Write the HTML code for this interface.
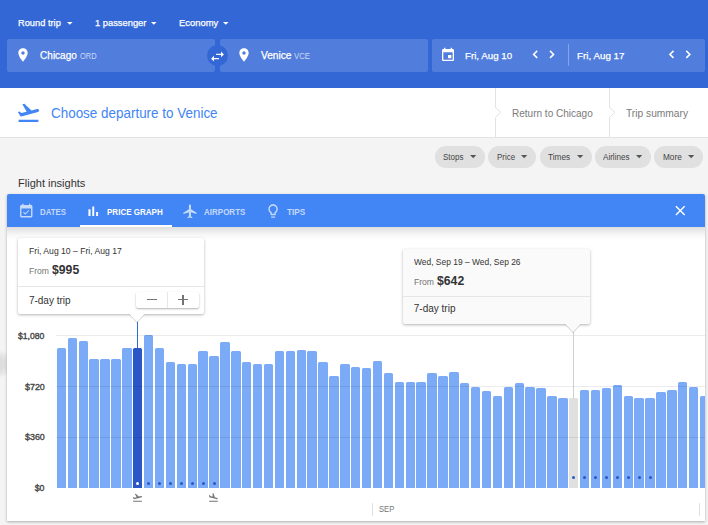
<!DOCTYPE html>
<html><head><meta charset="utf-8"><style>
html,body{margin:0;padding:0}
body{width:708px;height:525px;overflow:hidden;position:relative;background:#f4f4f4;font-family:"Liberation Sans",sans-serif}
.t{position:absolute;white-space:nowrap}
.i{position:absolute;display:block;overflow:visible}
.b{position:absolute}
</style></head><body>
<div class="b" style="left:0;top:0;width:708px;height:88px;background:#3367d6"></div>
<div class="t" style="left:18.20px;top:18.20px;font-size:9.8px;line-height:9.8px;color:#fff;font-weight:normal;transform:scaleX(0.9465);transform-origin:0 0;-webkit-text-stroke:0.25px currentColor;">Round trip</div>
<svg class="i" style="left:66.90px;top:22.10px" width="5.6" height="2.8" viewBox="0 0 5.6 2.8"><path fill="#fff" d="M0 0H5.6L2.8 2.8Z"/></svg>
<div class="t" style="left:94.70px;top:18.20px;font-size:9.8px;line-height:9.8px;color:#fff;font-weight:normal;transform:scaleX(0.9529);transform-origin:0 0;-webkit-text-stroke:0.25px currentColor;">1 passenger</div>
<svg class="i" style="left:151.30px;top:22.10px" width="5.6" height="2.8" viewBox="0 0 5.6 2.8"><path fill="#fff" d="M0 0H5.6L2.8 2.8Z"/></svg>
<div class="t" style="left:179.00px;top:18.20px;font-size:9.8px;line-height:9.8px;color:#fff;font-weight:normal;transform:scaleX(0.9597);transform-origin:0 0;-webkit-text-stroke:0.25px currentColor;">Economy</div>
<svg class="i" style="left:223.40px;top:22.10px" width="5.6" height="2.8" viewBox="0 0 5.6 2.8"><path fill="#fff" d="M0 0H5.6L2.8 2.8Z"/></svg>
<div class="b" style="left:7px;top:39px;width:208px;height:33px;background:rgba(255,255,255,0.15);border-radius:2px"></div>
<div class="b" style="left:220px;top:39px;width:208px;height:33px;background:rgba(255,255,255,0.15);border-radius:2px"></div>
<div class="b" style="left:432px;top:39px;width:273px;height:33px;background:rgba(255,255,255,0.15);border-radius:2px"></div>
<div class="b" style="left:206.6px;top:44.6px;width:21.5px;height:21.5px;background:#3367d6;border-radius:50%"></div>
<svg class="i" style="left:208.80px;top:47.80px;" width="17" height="17" viewBox="0 0 24 24"><path fill="#fff" d="M6.99 11L3 15l3.99 4v-3H14v-2H6.99v-3zM21 9l-3.99-4v3H10v2h7.01v3L21 9z"/></svg>
<svg class="i" style="left:14.90px;top:46.90px;" width="16" height="16" viewBox="0 0 24 24"><path fill="#fff" d="M12 2C8.13 2 5 5.13 5 9c0 5.25 7 13 7 13s7-7.75 7-13c0-3.87-3.13-7-7-7zm0 9.5c-1.38 0-2.5-1.12-2.5-2.5s1.12-2.5 2.5-2.5 2.5 1.12 2.5 2.5-1.12 2.5-2.5 2.5z"/></svg>
<svg class="i" style="left:235.80px;top:46.90px;" width="16" height="16" viewBox="0 0 24 24"><path fill="#fff" d="M12 2C8.13 2 5 5.13 5 9c0 5.25 7 13 7 13s7-7.75 7-13c0-3.87-3.13-7-7-7zm0 9.5c-1.38 0-2.5-1.12-2.5-2.5s1.12-2.5 2.5-2.5 2.5 1.12 2.5 2.5-1.12 2.5-2.5 2.5z"/></svg>
<div class="t" style="left:40.10px;top:50.73px;font-size:10px;line-height:10px;color:#fff;font-weight:normal;-webkit-text-stroke:0.25px currentColor;">Chicago</div>
<div class="t" style="left:79.70px;top:51.92px;font-size:8.6px;line-height:8.6px;color:rgba(255,255,255,0.72);font-weight:normal;transform:scaleX(0.8687);transform-origin:0 0;">ORD</div>
<div class="t" style="left:260.50px;top:50.73px;font-size:10px;line-height:10px;color:#fff;font-weight:normal;transform:scaleX(1.0160);transform-origin:0 0;-webkit-text-stroke:0.25px currentColor;">Venice</div>
<div class="t" style="left:293.80px;top:51.92px;font-size:8.6px;line-height:8.6px;color:rgba(255,255,255,0.72);font-weight:normal;transform:scaleX(0.9106);transform-origin:0 0;">VCE</div>
<svg class="i" style="left:439.80px;top:47.40px;" width="16" height="16" viewBox="0 0 24 24"><path fill="#fff" d="M17 12h-5v5h5v-5zM16 1v2H8V1H6v2H5c-1.11 0-1.99.9-1.99 2L3 19c0 1.1.89 2 2 2h14c1.1 0 2-.9 2-2V5c0-1.1-.9-2-2-2h-1V1h-2zm3 18H5V8h14v11z"/></svg>
<div class="t" style="left:465.30px;top:50.90px;font-size:9.8px;line-height:9.8px;color:#fff;font-weight:normal;transform:scaleX(0.9938);transform-origin:0 0;-webkit-text-stroke:0.25px currentColor;">Fri, Aug 10</div>
<svg class="i" style="left:0;top:0" width="708" height="80"><polyline points="537.2,50.9 533.6,54.4 537.2,57.9" fill="none" stroke="#fff" stroke-width="1.5"/></svg>
<svg class="i" style="left:0;top:0" width="708" height="80"><polyline points="550.0,50.9 553.6,54.4 550.0,57.9" fill="none" stroke="#fff" stroke-width="1.5"/></svg>
<div class="b" style="left:568px;top:44.4px;width:1px;height:21.6px;background:rgba(255,255,255,0.3)"></div>
<div class="t" style="left:577.10px;top:50.90px;font-size:9.8px;line-height:9.8px;color:#fff;font-weight:normal;-webkit-text-stroke:0.25px currentColor;">Fri, Aug 17</div>
<svg class="i" style="left:0;top:0" width="708" height="80"><polyline points="673.5,50.9 669.9,54.4 673.5,57.9" fill="none" stroke="#fff" stroke-width="1.5"/></svg>
<svg class="i" style="left:0;top:0" width="708" height="80"><polyline points="686.3,50.9 689.9,54.4 686.3,57.9" fill="none" stroke="#fff" stroke-width="1.5"/></svg>
<div class="b" style="left:0;top:88px;width:708px;height:49px;background:#fff;border-bottom:1px solid #e3e3e3"></div>
<svg class="i" style="left:16.30px;top:99.90px;" width="25" height="25" viewBox="0 0 24 24"><path fill="#4285f4" d="M2.5 19h19v2h-19zm19.57-9.36c-.21-.8-1.04-1.28-1.84-1.06L14.92 10l-6.9-6.43-1.93.51 4.14 7.17-4.97 1.33-1.97-1.54-1.45.39 1.82 3.16.77 1.33 1.6-.43 5.31-1.42 4.35-1.16 5.31-1.42c.81-.23 1.28-1.05 1.07-1.85z"/></svg>
<div class="t" style="left:51.00px;top:106.35px;font-size:14px;line-height:14px;color:#4285f4;font-weight:normal;transform:scaleX(0.9598);transform-origin:0 0;">Choose departure to Venice</div>
<svg class="i" style="left:494.9px;top:88px" width="8" height="49" viewBox="0 0 8 49"><path d="M0.5 0V19.6L5.9 24.3L0.5 29.4V49" fill="none" stroke="#e3e3e3" stroke-width="1"/></svg>
<svg class="i" style="left:609.0px;top:88px" width="8" height="49" viewBox="0 0 8 49"><path d="M0.5 0V19.6L5.9 24.3L0.5 29.4V49" fill="none" stroke="#e3e3e3" stroke-width="1"/></svg>
<div class="t" style="left:511.75px;top:108.90px;font-size:10.4px;line-height:10.4px;color:#7a7a7a;font-weight:normal;transform:scaleX(0.9639);transform-origin:0 0;">Return to Chicago</div>
<div class="t" style="left:625.90px;top:108.90px;font-size:10.4px;line-height:10.4px;color:#7a7a7a;font-weight:normal;transform:scaleX(0.9831);transform-origin:0 0;">Trip summary</div>
<div class="b" style="left:435.0px;top:146px;width:50.0px;height:21.6px;background:#e0e0e0;border-radius:11px"></div>
<div class="t" style="left:442.80px;top:153.01px;font-size:9.2px;line-height:9.2px;color:#444;font-weight:normal;transform:scaleX(0.8714);transform-origin:0 0;">Stops</div>
<svg class="i" style="left:469.80px;top:155.10px" width="6.3" height="3.15" viewBox="0 0 6.3 3.15"><path fill="#555" d="M0 0H6.3L3.15 3.15Z"/></svg>
<div class="b" style="left:488.4px;top:146px;width:47.5px;height:21.6px;background:#e0e0e0;border-radius:11px"></div>
<div class="t" style="left:496.75px;top:153.01px;font-size:9.2px;line-height:9.2px;color:#444;font-weight:normal;transform:scaleX(0.8613);transform-origin:0 0;">Price</div>
<svg class="i" style="left:520.90px;top:155.10px" width="6.3" height="3.15" viewBox="0 0 6.3 3.15"><path fill="#555" d="M0 0H6.3L3.15 3.15Z"/></svg>
<div class="b" style="left:539.7px;top:146px;width:52.0px;height:21.6px;background:#e0e0e0;border-radius:11px"></div>
<div class="t" style="left:547.75px;top:153.01px;font-size:9.2px;line-height:9.2px;color:#444;font-weight:normal;transform:scaleX(0.9007);transform-origin:0 0;">Times</div>
<svg class="i" style="left:576.60px;top:155.10px" width="6.3" height="3.15" viewBox="0 0 6.3 3.15"><path fill="#555" d="M0 0H6.3L3.15 3.15Z"/></svg>
<div class="b" style="left:595.1px;top:146px;width:55.9px;height:21.6px;background:#e0e0e0;border-radius:11px"></div>
<div class="t" style="left:603.20px;top:153.01px;font-size:9.2px;line-height:9.2px;color:#444;font-weight:normal;transform:scaleX(0.8784);transform-origin:0 0;">Airlines</div>
<svg class="i" style="left:636.20px;top:155.10px" width="6.3" height="3.15" viewBox="0 0 6.3 3.15"><path fill="#555" d="M0 0H6.3L3.15 3.15Z"/></svg>
<div class="b" style="left:654.4px;top:146px;width:48.5px;height:21.6px;background:#e0e0e0;border-radius:11px"></div>
<div class="t" style="left:662.50px;top:153.01px;font-size:9.2px;line-height:9.2px;color:#444;font-weight:normal;transform:scaleX(0.8970);transform-origin:0 0;">More</div>
<svg class="i" style="left:687.60px;top:155.10px" width="6.3" height="3.15" viewBox="0 0 6.3 3.15"><path fill="#555" d="M0 0H6.3L3.15 3.15Z"/></svg>
<div class="t" style="left:18.10px;top:177.69px;font-size:11px;line-height:11px;color:#333;font-weight:normal;">Flight insights</div>
<div class="b" style="left:-16px;top:350px;width:28px;height:28px;border-radius:50%;background:radial-gradient(circle,rgba(0,0,0,0.09) 30%,rgba(0,0,0,0.04) 60%,rgba(0,0,0,0) 71%)"></div>
<div class="b" style="left:7px;top:194px;width:698px;height:327px;background:#fff;box-shadow:0 1px 3px rgba(0,0,0,0.3);border-radius:2px 2px 0 0;overflow:hidden">
<div class="b" style="left:49.75px;top:154.00px;width:9.45px;height:139.80px;background:#7baaf7;border-radius:1.5px 1.5px 0 0"></div>
<div class="b" style="left:60.65px;top:143.50px;width:9.45px;height:150.30px;background:#7baaf7;border-radius:1.5px 1.5px 0 0"></div>
<div class="b" style="left:71.55px;top:147.00px;width:9.45px;height:146.80px;background:#7baaf7;border-radius:1.5px 1.5px 0 0"></div>
<div class="b" style="left:82.45px;top:165.00px;width:9.45px;height:128.80px;background:#7baaf7;border-radius:1.5px 1.5px 0 0"></div>
<div class="b" style="left:93.35px;top:165.00px;width:9.45px;height:128.80px;background:#7baaf7;border-radius:1.5px 1.5px 0 0"></div>
<div class="b" style="left:104.25px;top:165.00px;width:9.45px;height:128.80px;background:#7baaf7;border-radius:1.5px 1.5px 0 0"></div>
<div class="b" style="left:115.15px;top:154.00px;width:9.45px;height:139.80px;background:#7baaf7;border-radius:1.5px 1.5px 0 0"></div>
<div class="b" style="left:126.05px;top:154.00px;width:9.45px;height:139.80px;background:#2a56c6;border-radius:1.5px 1.5px 0 0"></div>
<div class="b" style="left:136.95px;top:140.80px;width:9.45px;height:153.00px;background:#7baaf7;border-radius:1.5px 1.5px 0 0"></div>
<div class="b" style="left:147.85px;top:154.40px;width:9.45px;height:139.40px;background:#7baaf7;border-radius:1.5px 1.5px 0 0"></div>
<div class="b" style="left:158.75px;top:168.00px;width:9.45px;height:125.80px;background:#7baaf7;border-radius:1.5px 1.5px 0 0"></div>
<div class="b" style="left:169.65px;top:169.50px;width:9.45px;height:124.30px;background:#7baaf7;border-radius:1.5px 1.5px 0 0"></div>
<div class="b" style="left:180.55px;top:169.50px;width:9.45px;height:124.30px;background:#7baaf7;border-radius:1.5px 1.5px 0 0"></div>
<div class="b" style="left:191.45px;top:157.00px;width:9.45px;height:136.80px;background:#7baaf7;border-radius:1.5px 1.5px 0 0"></div>
<div class="b" style="left:202.35px;top:162.00px;width:9.45px;height:131.80px;background:#7baaf7;border-radius:1.5px 1.5px 0 0"></div>
<div class="b" style="left:213.25px;top:148.20px;width:9.45px;height:145.60px;background:#7baaf7;border-radius:1.5px 1.5px 0 0"></div>
<div class="b" style="left:224.15px;top:157.00px;width:9.45px;height:136.80px;background:#7baaf7;border-radius:1.5px 1.5px 0 0"></div>
<div class="b" style="left:235.05px;top:168.00px;width:9.45px;height:125.80px;background:#7baaf7;border-radius:1.5px 1.5px 0 0"></div>
<div class="b" style="left:245.95px;top:169.50px;width:9.45px;height:124.30px;background:#7baaf7;border-radius:1.5px 1.5px 0 0"></div>
<div class="b" style="left:256.85px;top:169.50px;width:9.45px;height:124.30px;background:#7baaf7;border-radius:1.5px 1.5px 0 0"></div>
<div class="b" style="left:267.75px;top:157.00px;width:9.45px;height:136.80px;background:#7baaf7;border-radius:1.5px 1.5px 0 0"></div>
<div class="b" style="left:278.65px;top:157.00px;width:9.45px;height:136.80px;background:#7baaf7;border-radius:1.5px 1.5px 0 0"></div>
<div class="b" style="left:289.55px;top:155.80px;width:9.45px;height:138.00px;background:#7baaf7;border-radius:1.5px 1.5px 0 0"></div>
<div class="b" style="left:300.45px;top:157.00px;width:9.45px;height:136.80px;background:#7baaf7;border-radius:1.5px 1.5px 0 0"></div>
<div class="b" style="left:311.35px;top:168.00px;width:9.45px;height:125.80px;background:#7baaf7;border-radius:1.5px 1.5px 0 0"></div>
<div class="b" style="left:322.25px;top:181.60px;width:9.45px;height:112.20px;background:#7baaf7;border-radius:1.5px 1.5px 0 0"></div>
<div class="b" style="left:333.15px;top:169.50px;width:9.45px;height:124.30px;background:#7baaf7;border-radius:1.5px 1.5px 0 0"></div>
<div class="b" style="left:344.05px;top:173.00px;width:9.45px;height:120.80px;background:#7baaf7;border-radius:1.5px 1.5px 0 0"></div>
<div class="b" style="left:354.95px;top:174.20px;width:9.45px;height:119.60px;background:#7baaf7;border-radius:1.5px 1.5px 0 0"></div>
<div class="b" style="left:365.85px;top:166.70px;width:9.45px;height:127.10px;background:#7baaf7;border-radius:1.5px 1.5px 0 0"></div>
<div class="b" style="left:376.75px;top:179.10px;width:9.45px;height:114.70px;background:#7baaf7;border-radius:1.5px 1.5px 0 0"></div>
<div class="b" style="left:387.65px;top:188.20px;width:9.45px;height:105.60px;background:#7baaf7;border-radius:1.5px 1.5px 0 0"></div>
<div class="b" style="left:398.55px;top:188.20px;width:9.45px;height:105.60px;background:#7baaf7;border-radius:1.5px 1.5px 0 0"></div>
<div class="b" style="left:409.45px;top:188.20px;width:9.45px;height:105.60px;background:#7baaf7;border-radius:1.5px 1.5px 0 0"></div>
<div class="b" style="left:420.35px;top:179.10px;width:9.45px;height:114.70px;background:#7baaf7;border-radius:1.5px 1.5px 0 0"></div>
<div class="b" style="left:431.25px;top:182.00px;width:9.45px;height:111.80px;background:#7baaf7;border-radius:1.5px 1.5px 0 0"></div>
<div class="b" style="left:442.15px;top:177.60px;width:9.45px;height:116.20px;background:#7baaf7;border-radius:1.5px 1.5px 0 0"></div>
<div class="b" style="left:453.05px;top:189.20px;width:9.45px;height:104.60px;background:#7baaf7;border-radius:1.5px 1.5px 0 0"></div>
<div class="b" style="left:463.95px;top:192.60px;width:9.45px;height:101.20px;background:#7baaf7;border-radius:1.5px 1.5px 0 0"></div>
<div class="b" style="left:474.85px;top:197.30px;width:9.45px;height:96.50px;background:#7baaf7;border-radius:1.5px 1.5px 0 0"></div>
<div class="b" style="left:485.75px;top:201.50px;width:9.45px;height:92.30px;background:#7baaf7;border-radius:1.5px 1.5px 0 0"></div>
<div class="b" style="left:496.65px;top:192.60px;width:9.45px;height:101.20px;background:#7baaf7;border-radius:1.5px 1.5px 0 0"></div>
<div class="b" style="left:507.55px;top:189.20px;width:9.45px;height:104.60px;background:#7baaf7;border-radius:1.5px 1.5px 0 0"></div>
<div class="b" style="left:518.45px;top:192.60px;width:9.45px;height:101.20px;background:#7baaf7;border-radius:1.5px 1.5px 0 0"></div>
<div class="b" style="left:529.35px;top:194.20px;width:9.45px;height:99.60px;background:#7baaf7;border-radius:1.5px 1.5px 0 0"></div>
<div class="b" style="left:540.25px;top:201.50px;width:9.45px;height:92.30px;background:#7baaf7;border-radius:1.5px 1.5px 0 0"></div>
<div class="b" style="left:551.15px;top:203.80px;width:9.45px;height:90.00px;background:#7baaf7;border-radius:1.5px 1.5px 0 0"></div>
<div class="b" style="left:562.05px;top:203.90px;width:9.45px;height:89.90px;background:#e0e0e0;border-radius:1.5px 1.5px 0 0"></div>
<div class="b" style="left:572.95px;top:195.60px;width:9.45px;height:98.20px;background:#7baaf7;border-radius:1.5px 1.5px 0 0"></div>
<div class="b" style="left:583.85px;top:195.60px;width:9.45px;height:98.20px;background:#7baaf7;border-radius:1.5px 1.5px 0 0"></div>
<div class="b" style="left:594.75px;top:194.10px;width:9.45px;height:99.70px;background:#7baaf7;border-radius:1.5px 1.5px 0 0"></div>
<div class="b" style="left:605.65px;top:191.40px;width:9.45px;height:102.40px;background:#7baaf7;border-radius:1.5px 1.5px 0 0"></div>
<div class="b" style="left:616.55px;top:201.50px;width:9.45px;height:92.30px;background:#7baaf7;border-radius:1.5px 1.5px 0 0"></div>
<div class="b" style="left:627.45px;top:203.70px;width:9.45px;height:90.10px;background:#7baaf7;border-radius:1.5px 1.5px 0 0"></div>
<div class="b" style="left:638.35px;top:203.70px;width:9.45px;height:90.10px;background:#7baaf7;border-radius:1.5px 1.5px 0 0"></div>
<div class="b" style="left:649.25px;top:197.50px;width:9.45px;height:96.30px;background:#7baaf7;border-radius:1.5px 1.5px 0 0"></div>
<div class="b" style="left:660.15px;top:195.50px;width:9.45px;height:98.30px;background:#7baaf7;border-radius:1.5px 1.5px 0 0"></div>
<div class="b" style="left:671.05px;top:188.00px;width:9.45px;height:105.80px;background:#7baaf7;border-radius:1.5px 1.5px 0 0"></div>
<div class="b" style="left:681.95px;top:192.90px;width:9.45px;height:100.90px;background:#7baaf7;border-radius:1.5px 1.5px 0 0"></div>
<div class="b" style="left:692.85px;top:201.70px;width:9.45px;height:92.10px;background:#7baaf7;border-radius:1.5px 1.5px 0 0"></div>
<div class="b" style="left:49px;top:140.90px;width:700px;height:1px;background:rgba(0,0,0,0.08)"></div>
<div class="b" style="left:49px;top:191.90px;width:700px;height:1px;background:rgba(0,0,0,0.08)"></div>
<div class="b" style="left:49px;top:242.70px;width:700px;height:1px;background:rgba(0,0,0,0.08)"></div>
<div class="t" style="left:11.10px;top:137.55px;font-size:8.8px;line-height:8.8px;color:#444;font-weight:normal;transform:scaleX(0.9807);transform-origin:0 0;-webkit-text-stroke:0.35px #444;">$1,080</div>
<div class="t" style="left:17.70px;top:188.55px;font-size:8.8px;line-height:8.8px;color:#444;font-weight:normal;transform:scaleX(1.0112);transform-origin:0 0;-webkit-text-stroke:0.35px #444;">$720</div>
<div class="t" style="left:17.70px;top:239.35px;font-size:8.8px;line-height:8.8px;color:#444;font-weight:normal;transform:scaleX(1.0112);transform-origin:0 0;-webkit-text-stroke:0.35px #444;">$360</div>
<div class="t" style="left:27.70px;top:289.65px;font-size:8.8px;line-height:8.8px;color:#444;font-weight:normal;-webkit-text-stroke:0.35px #444;">$0</div>
<div class="b" style="left:129.20px;top:287.90px;width:3px;height:3px;border-radius:50%;background:#fff"></div>
<div class="b" style="left:140.10px;top:287.90px;width:3px;height:3px;border-radius:50%;background:#2a56c6"></div>
<div class="b" style="left:151.00px;top:287.90px;width:3px;height:3px;border-radius:50%;background:#2a56c6"></div>
<div class="b" style="left:161.90px;top:287.90px;width:3px;height:3px;border-radius:50%;background:#2a56c6"></div>
<div class="b" style="left:172.80px;top:287.90px;width:3px;height:3px;border-radius:50%;background:#2a56c6"></div>
<div class="b" style="left:183.70px;top:287.90px;width:3px;height:3px;border-radius:50%;background:#2a56c6"></div>
<div class="b" style="left:194.60px;top:287.90px;width:3px;height:3px;border-radius:50%;background:#2a56c6"></div>
<div class="b" style="left:205.50px;top:287.90px;width:3px;height:3px;border-radius:50%;background:#2a56c6"></div>
<div class="b" style="left:565.20px;top:282.40px;width:3px;height:3px;border-radius:50%;background:#2a56c6"></div>
<div class="b" style="left:576.10px;top:282.40px;width:3px;height:3px;border-radius:50%;background:#2a56c6"></div>
<div class="b" style="left:587.00px;top:282.40px;width:3px;height:3px;border-radius:50%;background:#2a56c6"></div>
<div class="b" style="left:597.90px;top:282.40px;width:3px;height:3px;border-radius:50%;background:#2a56c6"></div>
<div class="b" style="left:608.80px;top:282.40px;width:3px;height:3px;border-radius:50%;background:#2a56c6"></div>
<div class="b" style="left:619.70px;top:282.40px;width:3px;height:3px;border-radius:50%;background:#2a56c6"></div>
<div class="b" style="left:630.60px;top:282.40px;width:3px;height:3px;border-radius:50%;background:#2a56c6"></div>
<div class="b" style="left:641.50px;top:282.40px;width:3px;height:3px;border-radius:50%;background:#2a56c6"></div>
<div class="b" style="left:130px;top:127px;width:1px;height:27px;background:#3367d6"></div>
<div class="b" style="left:566px;top:138px;width:1px;height:66px;background:#cfcfcf"></div>
<svg class="i" style="left:125.05px;top:298.30px;" width="11" height="11" viewBox="0 0 24 24"><path fill="#757575" d="M2.5 19h19v2h-19zm19.57-9.36c-.21-.8-1.04-1.28-1.84-1.06L14.92 10l-6.9-6.43-1.93.51 4.14 7.17-4.97 1.33-1.97-1.54-1.45.39 1.82 3.16.77 1.33 1.6-.43 5.31-1.42 4.35-1.16 5.31-1.42c.81-.23 1.28-1.05 1.07-1.85z"/></svg>
<svg class="i" style="left:201.15px;top:298.30px;" width="11" height="11" viewBox="0 0 24 24"><path fill="#757575" d="M2.5 19h19v2h-19zm7.18-5.73l4.35 1.16 5.31 1.42c.8.21 1.62-.26 1.84-1.06.21-.8-.26-1.62-1.06-1.84l-5.31-1.42-2.76-9.02L10.12 2v8.28L5.15 8.95l-.93-2.32-1.45-.39v5.17l1.6.43 5.31 1.43z"/></svg>
<div class="b" style="left:365.00px;top:308.6px;width:1px;height:13px;background:#e0e0e0"></div>
<div class="b" style="left:692.30px;top:308.6px;width:1px;height:13px;background:#e0e0e0"></div>
<div class="t" style="left:371.50px;top:310.99px;font-size:8.4px;line-height:8.4px;color:#757575;font-weight:normal;transform:scaleX(0.9162);transform-origin:0 0;">SEP</div>
<div class="b" style="left:0;top:33px;width:698px;height:13px;background:linear-gradient(rgba(0,0,0,0.13),rgba(0,0,0,0.03) 60%,rgba(0,0,0,0))"></div>
<div class="b" style="left:0;top:0;width:698px;height:33px;background:#4285f4"></div>
<svg class="i" style="left:10.60px;top:8.60px;" width="16.5" height="16.5" viewBox="0 0 24 24"><path fill="rgba(255,255,255,0.7)" d="M16.53 11.06L15.47 10l-4.88 4.88-2.12-2.12-1.06 1.06L10.59 17l5.94-5.94zM19 3h-1V1h-2v2H8V1H6v2H5c-1.11 0-1.99.9-1.99 2L3 19c0 1.1.89 2 2 2h14c1.1 0 2-.9 2-2V5c0-1.1-.9-2-2-2zm0 16H5V8h14v11z"/></svg>
<div class="t" style="left:33.00px;top:13.34px;font-size:9.4px;line-height:9.4px;color:rgba(255,255,255,0.7);font-weight:bold;transform:scaleX(0.8376);transform-origin:0 0;">DATES</div>
<svg class="i" style="left:77.90px;top:8.70px;" width="16.5" height="16.5" viewBox="0 0 24 24"><path fill="#fff" d="M5 9.2h3V19H5zM10.6 5h2.8v14h-2.8zm5.6 8H19v6h-2.8z"/></svg>
<div class="t" style="left:100.30px;top:13.34px;font-size:9.4px;line-height:9.4px;color:#fff;font-weight:bold;transform:scaleX(0.8563);transform-origin:0 0;">PRICE GRAPH</div>
<div class="b" style="left:72.8px;top:31px;width:92px;height:2px;background:#fff"></div>
<svg class="i" style="left:175.30px;top:8.50px;" width="16.6" height="16.6" viewBox="0 0 24 24"><path fill="rgba(255,255,255,0.7)" d="M21 16v-2l-8-5V3.5c0-.83-.67-1.5-1.5-1.5S10 2.67 10 3.5V9l-8 5v2l8-2.5V19l-2 1.5V22l3.5-1 3.5 1v-1.5L13 19v-5.5l8 2.5z"/></svg>
<div class="t" style="left:197.30px;top:13.34px;font-size:9.4px;line-height:9.4px;color:rgba(255,255,255,0.7);font-weight:bold;transform:scaleX(0.8544);transform-origin:0 0;">AIRPORTS</div>
<svg class="i" style="left:257.60px;top:9.00px;" width="16.2" height="16.2" viewBox="0 0 24 24"><path fill="rgba(255,255,255,0.7)" d="M9 21c0 .55.45 1 1 1h4c.55 0 1-.45 1-1v-1H9v1zm3-19C8.14 2 5 5.14 5 9c0 2.38 1.19 4.47 3 5.74V17c0 .55.45 1 1 1h6c.55 0 1-.45 1-1v-2.26c1.81-1.27 3-3.36 3-5.74 0-3.86-3.14-7-7-7zm2.85 11.1l-.85.6V16h-4v-2.3l-.85-.6C7.8 12.16 7 10.63 7 9c0-2.76 2.24-5 5-5s5 2.24 5 5c0 1.63-.8 3.16-2.15 4.1z"/></svg>
<div class="t" style="left:280.20px;top:13.34px;font-size:9.4px;line-height:9.4px;color:rgba(255,255,255,0.7);font-weight:bold;transform:scaleX(0.8758);transform-origin:0 0;">TIPS</div>
<svg class="i" style="left:0;top:0" width="698" height="40"><path d="M668.9 12.199999999999989L677.7 21.0M677.7 12.199999999999989L668.9 21.0" stroke="#fff" stroke-width="1.45" fill="none"/></svg>
<div class="b" style="left:10.60px;top:44.00px;width:186.6px;height:76px;background:#fff;box-shadow:0 1px 3px rgba(0,0,0,0.3);border-radius:2px"></div>
<svg class="i" style="left:121.40px;top:119.00px" width="18" height="11" viewBox="0 0 18 11"><path d="M0 1H1L9 9.6L17 1H18" fill="#fff" stroke="rgba(0,0,0,0.18)" stroke-width="1"/><rect x="0" y="0" width="18" height="1.2" fill="#fff"/></svg>
<div class="b" style="left:10.60px;top:92.00px;width:186.6px;height:1px;background:#e6e6e6"></div>
<div class="t" style="left:21.90px;top:52.61px;font-size:9.2px;line-height:9.2px;color:#333;font-weight:normal;transform:scaleX(0.9374);transform-origin:0 0;">Fri, Aug 10 – Fri, Aug 17</div>
<div class="t" style="left:21.90px;top:72.68px;font-size:9px;line-height:9px;color:#757575;font-weight:normal;transform:scaleX(0.9525);transform-origin:0 0;">From</div>
<div class="t" style="left:44.80px;top:69.89px;font-size:12.3px;line-height:12.3px;color:#333;font-weight:bold;transform:scaleX(0.9939);transform-origin:0 0;">$995</div>
<div class="t" style="left:21.90px;top:101.64px;font-size:10px;line-height:10px;color:#333;font-weight:normal;">7-day trip</div>
<div class="b" style="left:128.80px;top:97.60px;width:63px;height:16.2px;background:#fff;box-shadow:0 1px 2px rgba(0,0,0,0.3);border-radius:2px"></div>
<div class="b" style="left:160.30px;top:97.60px;width:1px;height:16.2px;background:#e6e6e6"></div>
<div class="b" style="left:140.00px;top:105.00px;width:10px;height:1.4px;background:#747474"></div>
<div class="b" style="left:171.40px;top:105.00px;width:9.6px;height:1.4px;background:#747474"></div>
<div class="b" style="left:175.40px;top:101.00px;width:1.4px;height:9.6px;background:#747474"></div>
<div class="b" style="left:395.50px;top:54.50px;width:187px;height:75.5px;background:#fafafa;box-shadow:0 1px 3px rgba(0,0,0,0.3);border-radius:2px"></div>
<svg class="i" style="left:557.30px;top:129.00px" width="18" height="11" viewBox="0 0 18 11"><path d="M0 1H1L9 9.6L17 1H18" fill="#fafafa" stroke="rgba(0,0,0,0.18)" stroke-width="1"/><rect x="0" y="0" width="18" height="1.2" fill="#fafafa"/></svg>
<div class="b" style="left:395.50px;top:102.00px;width:187px;height:1px;background:#e6e6e6"></div>
<div class="t" style="left:406.80px;top:64.01px;font-size:9.2px;line-height:9.2px;color:#333;font-weight:normal;transform:scaleX(0.9177);transform-origin:0 0;">Wed, Sep 19 – Wed, Sep 26</div>
<div class="t" style="left:406.80px;top:83.68px;font-size:9px;line-height:9px;color:#757575;font-weight:normal;transform:scaleX(0.9525);transform-origin:0 0;">From</div>
<div class="t" style="left:429.70px;top:80.89px;font-size:12.3px;line-height:12.3px;color:#333;font-weight:bold;transform:scaleX(0.9939);transform-origin:0 0;">$642</div>
<div class="t" style="left:406.80px;top:109.64px;font-size:10px;line-height:10px;color:#333;font-weight:normal;">7-day trip</div>
</div>
</body></html>
